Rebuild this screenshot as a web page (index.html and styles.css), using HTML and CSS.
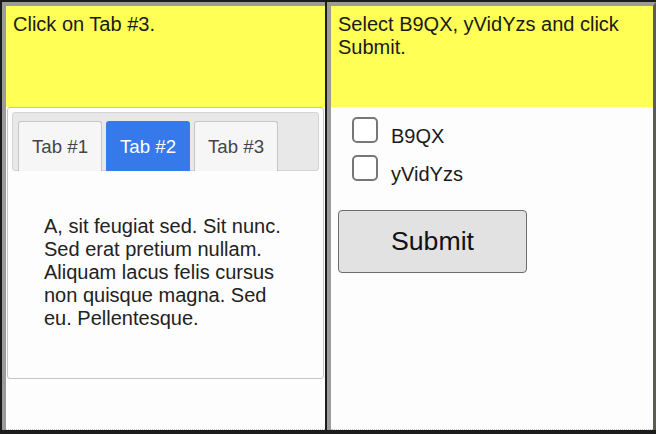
FILE: index.html
```html
<!DOCTYPE html>
<html>
<head>
<meta charset="utf-8">
<link rel="stylesheet" href="styles.css">
</head>
<body>
<div class="screen">
  <section class="panel left">
    <div class="query">Click on Tab #3.</div>
    <div class="area">
      <div class="tabs">
        <ul class="nav">
          <li class="tab">Tab #1</li>
          <li class="tab active">Tab #2</li>
          <li class="tab">Tab #3</li>
        </ul>
        <div class="tab-panel">
          <p>A, sit feugiat sed. Sit nunc. Sed erat pretium nullam. Aliquam lacus felis cursus non quisque magna. Sed eu. Pellentesque.</p>
        </div>
      </div>
    </div>
  </section>
  <section class="panel right">
    <div class="query">Select B9QX, yVidYzs and click Submit.</div>
    <div class="area form">
      <label class="check"><span class="box"></span>B9QX</label>
      <label class="check"><span class="box"></span>yVidYzs</label>
      <button class="submit">Submit</button>
    </div>
  </section>
</div>
</body>
</html>
```
FILE: styles.css
```css
html, body {
  margin: 0;
  padding: 0;
}
body {
  width: 656px;
  height: 434px;
  overflow: hidden;
  background: #1c1c1c;
  font-family: "Liberation Sans", Arial, sans-serif;
  color: #1a1a1a;
}
.screen {
  display: flex;
  gap: 2px;
  padding: 2px 0 0 2px;
  box-sizing: border-box;
  height: 434px;
}
.panel {
  display: flex;
  flex-direction: column;
  height: 428px;
  box-sizing: border-box;
  border-top: 4px solid #9b9b9b;
  border-left: 4px solid #9b9b9b;
  background: #fdfdfd;
}
.left {
  width: 323px;
}
.right {
  width: 329px;
  border-right: 3px solid #5c5c54;
}
.query {
  flex: none;
  height: 101px;
  box-sizing: border-box;
  padding: 7px 7px 0 7px;
  background: #ffff55;
  font-size: 20px;
  line-height: 23px;
  color: #1a1a1a;
}
.area {
  flex: 1;
  border-bottom: 1px dotted #c4c4c4;
}
.tabs {
  margin: 0 1px;
  height: 272px;
  box-sizing: border-box;
  border: 1px solid #c5c5c5;
  border-radius: 3px;
  padding: 4px;
  display: flex;
  flex-direction: column;
}
.nav {
  list-style: none;
  margin: 0;
  padding: 0 5px;
  height: 59px;
  box-sizing: border-box;
  border: 1px solid #d4d4d4;
  border-radius: 3px;
  background: #e8e8e8;
  display: flex;
  align-items: flex-end;
  gap: 4px;
}
.tab {
  height: 50px;
  box-sizing: border-box;
  margin-bottom: -1px;
  padding: 0 13px;
  border: 1px solid #c5c5c5;
  border-bottom: 0;
  border-radius: 3px 3px 0 0;
  background: #f6f6f6;
  color: #454545;
  font-size: 18.67px;
  display: flex;
  align-items: center;
}
.tab.active {
  background: #3579ea;
  border-color: #3579ea;
  color: #ffffff;
}
.tab-panel {
  padding: 44px 0 0 32px;
  font-size: 20px;
  line-height: 23px;
  color: #222222;
}
.tab-panel p {
  margin: 0;
  width: 250px;
}
.form {
  padding-top: 10px;
}
.check {
  display: block;
  height: 38px;
  font-size: 20px;
  line-height: 23px;
  color: #1a1a1a;
}
.box {
  display: inline-block;
  width: 26px;
  height: 26px;
  box-sizing: border-box;
  border: 2px solid #777777;
  border-radius: 5px;
  background: #ffffff;
  vertical-align: baseline;
  margin: 0 13px 0 21px;
}
.submit {
  display: block;
  margin: 17px 0 0 7px;
  width: 189px;
  height: 63px;
  box-sizing: border-box;
  border: 1px solid #6c6c6c;
  border-radius: 4px;
  background: #e2e2e2;
  font-family: "Liberation Sans", Arial, sans-serif;
  font-size: 26.67px;
  color: #111111;
  padding: 0;
}
```
